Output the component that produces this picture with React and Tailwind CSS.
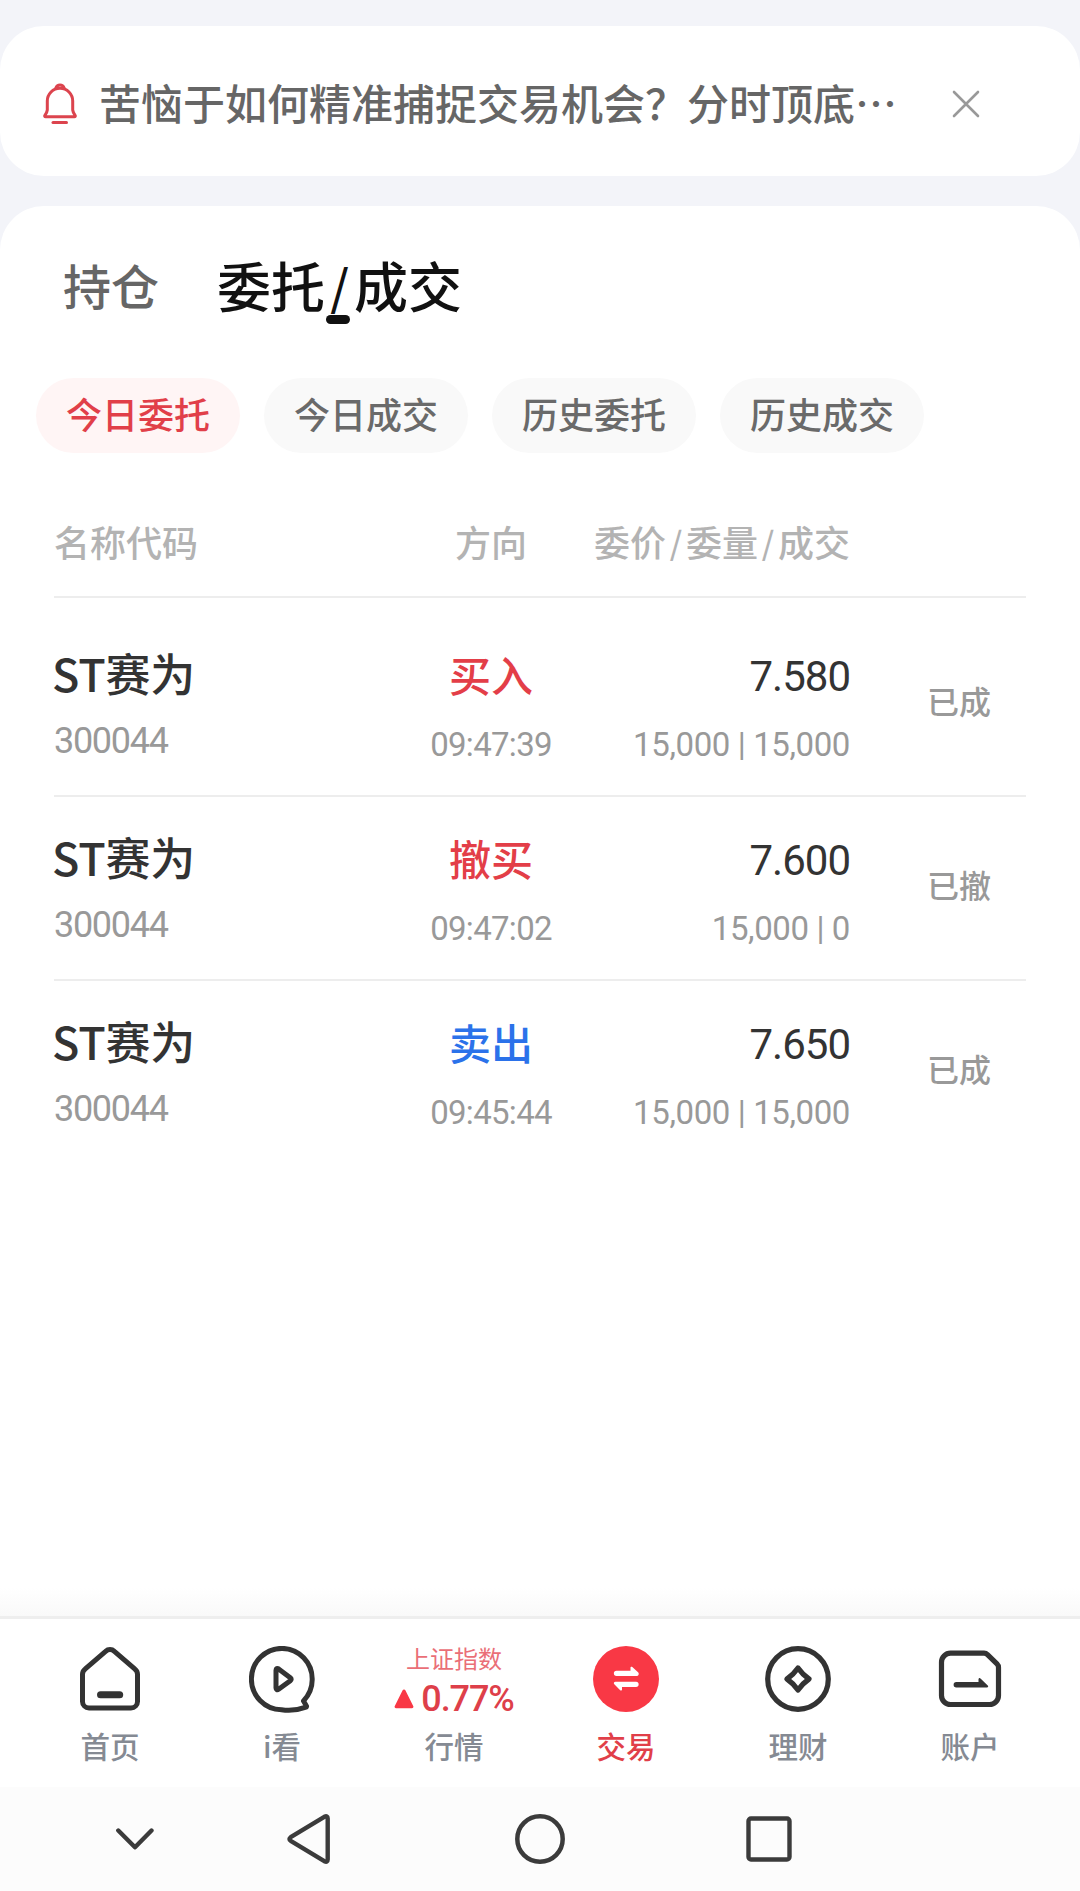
import { Fragment } from 'react';

// ── Données ───────────────────────────────────

const FILTERS = ['今日委托', '今日成交', '历史委托', '历史成交'];

const ORDERS = [
  { name: 'ST赛为', code: '300044', side: '买入', time: '09:47:39', price: '7.580', volume: '15,000', filled: '15,000', status: '已成' },
  { name: 'ST赛为', code: '300044', side: '撤买', time: '09:47:02', price: '7.600', volume: '15,000', filled: '0', status: '已撤' },
  { name: 'ST赛为', code: '300044', side: '卖出', time: '09:45:44', price: '7.650', volume: '15,000', filled: '15,000', status: '已成' },
];

// ── Icons ─────────────────────────────────────

function BellIcon() {
  return (
    <svg width="34" height="42" viewBox="0 0 34 42" fill="none" stroke="#dc444e" strokeWidth="3" strokeLinecap="round" strokeLinejoin="round">
      <path d="M4.300 27V18a12.700 12.800 0 0 1 25.400 0V27c.2 2.200 1.200 3.600 2.500 5.500.3.700 0 1.200-.8 1.200H2.600c-.8 0-1.100-.5-.8-1.200C3.100 30.600 4.100 29.200 4.300 27Z" />
      <path d="M12.800 5.200c.8-2.200 2.300-3.200 4.200-3.200s3.400 1 4.200 3.200" />
      <path d="M10 39.500h13.500" />
    </svg>
  );
}

function CloseIcon() {
  return (
    <svg width="28" height="28" viewBox="0 0 28 28" fill="none" stroke="#999" strokeWidth="2.600" strokeLinecap="round">
      <path d="M2 2l24 24M26 2L2 26" />
    </svg>
  );
}

function HomeIcon() {
  return (
    <svg width="66" height="68" viewBox="0 0 66 68" fill="none" stroke="#333" strokeWidth="5" strokeLinejoin="round" strokeLinecap="round">
      <path d="M28.600 5.300a6.500 6.500 0 0 1 8.800 0L58 23.200a6.500 6.500 0 0 1 2.500 5V55.500a6.500 6.500 0 0 1-6.500 6.500H12a6.500 6.500 0 0 1-6.500-6.500V28.200a6.500 6.500 0 0 1 2.500-5Z" />
      <path d="M23.500 48.700h19.200" strokeWidth="7" />
    </svg>
  );
}

function WatchIcon() {
  return (
    <svg width="66" height="68" viewBox="0 0 66 68" fill="none" stroke="#333" strokeWidth="5" strokeLinejoin="round" strokeLinecap="round">
      <path d="M54.500 55c5-5.500 8.700-12.500 8.700-21.300A30.400 30.700 0 1 0 32.500 63.800c8.500 1.300 17 .2 24.500-2.600.8-.4.700-1.200.2-1.700Z" />
      <path d="M27 24.200c0-1.700 1.300-2.200 2.600-1.300L41.300 31.800c1.200.9 1.200 2 0 2.900L29.600 43.300c-1.300.9-2.600.4-2.600-1.300Z" />
    </svg>
  );
}

function TradeIcon() {
  return (
    <svg width="66" height="68" viewBox="0 0 66 68">
      <circle cx="33" cy="33" r="33" fill="#f93845" />
      <path d="M23.500 24.700H37.500v-3c0-1 1-1.400 1.800-.7l6 5.600c.9 1 .5 3.400-1.200 3.400H23.500a2.650 2.650 0 0 1 0-5.300Z" fill="#fff" />
      <path d="M43 35.700H22.500c-1.700 0-2.100 1.600-1.200 2.600l5.900 5.900c.8.700 1.800.3 1.800-.7v-2.500H43a2.650 2.650 0 0 0 0-5.300Z" fill="#fff" />
    </svg>
  );
}

function WealthIcon() {
  return (
    <svg width="66" height="68" viewBox="0 0 66 68" fill="none" stroke="#333" strokeWidth="5.200" strokeLinejoin="round">
      <circle cx="33" cy="33" r="30.300" />
      <path d="M33 22q4.500 6.500 11 11q-6.500 4.500-11 11q-4.500-6.500-11-11q6.500-4.500 11-11Z" />
    </svg>
  );
}

function AccountIcon() {
  return (
    <svg width="66" height="68" viewBox="0 0 66 68" fill="none" stroke="#333" strokeWidth="5.200" strokeLinejoin="round" strokeLinecap="round">
      <path d="M13.500 7.200H47a5 5 0 0 1 3.500 1.400L60 17.800a5 5 0 0 1 1.500 3.600V49.500a9 9 0 0 1-9 9H13.500a9 9 0 0 1-9-9V16.200a9 9 0 0 1 9-9Z" />
      <path d="M19.300 36H41.500V33.500c0-1.500 1-2 2-1l7 6.700c1.200 1.100.8 2.200-.6 2.200H19.300a2.700 2.700 0 0 1 0-5.400Z" fill="#333" stroke="none" />
    </svg>
  );
}

// ── Sub-components ────────────────────────────

function Notice() {
  return (
    <div className="flex h-[150px] items-center rounded-[44px] bg-white pl-[43px] pt-[5px]">
      <BellIcon />
      <p className="-mt-1 ml-[22px] w-[800px] whitespace-nowrap text-[42px] leading-[60px] text-[#666]">
        苦恼于如何精准捕捉交易机会？分时顶底…
      </p>
      <button className="ml-[53px]" aria-label="关闭">
        <CloseIcon />
      </button>
    </div>
  );
}

function Slashed({ parts, className }) {
  return parts.map((part, i) => (
    <Fragment key={part}>
      {i > 0 && <span className={className}>/</span>}
      {part}
    </Fragment>
  ));
}

function Tabs() {
  return (
    <div className="flex items-start pl-[63px] pt-[42px]">
      <span className="text-[48px] leading-[72px] text-[#666]">持仓</span>
      <span className="relative ml-[58px] flex pt-px text-[54px] leading-[72px] text-[#111]">
        <Slashed parts={['委托', '成交']} className="w-[29px] text-center text-[48px] leading-[70px]" />
        <span className="absolute left-[109px] top-[67px] h-[9px] w-6 rounded-full bg-[#111]" />
      </span>
    </div>
  );
}

function Filters() {
  return (
    <div className="mt-[57px] flex gap-6 pl-9">
      {FILTERS.map((label, i) => (
        <button
          key={label}
          className={`h-[75px] w-[204px] rounded-full pb-[5px] text-[36px] font-medium leading-[70px] ${
            i === 0 ? 'bg-[#fff5f5] text-[#e13f49]' : 'bg-[#f9f9f9] text-[#6a6a6a]'
          }`}
        >
          {label}
        </button>
      ))}
    </div>
  );
}

function OrderRow({ order, last }) {
  const sideColor = order.side === '卖出' ? 'text-[#2b72ea]' : 'text-[#e33e48]';

  return (
    <div className={`flex h-[184px] border-b-2 ${last ? 'border-transparent' : 'border-[#ededed]'}`}>
      <div className="w-[360px] pt-[30px]">
        <p className="-ml-0.5 text-[45px] leading-[60px] tracking-[-0.2px] text-[#333]">{order.name}</p>
        <p className="mt-[18px] font-['Roboto'] text-[36px] font-normal leading-[40px] tracking-[-1.3px] text-[#999]">{order.code}</p>
      </div>
      <div className="w-[154px] pt-[31px] text-center">
        <p className={`text-[42px] leading-[60px] ${sideColor}`}>{order.side}</p>
        <p className="mt-[21px] font-['Roboto'] text-[33px] font-normal leading-[40px] tracking-[-0.7px] text-[#999]">{order.time}</p>
      </div>
      <div className="w-[282px] pt-[34px] text-right font-['Roboto'] font-normal">
        <p className="text-[42px] leading-[60px] tracking-[-1px] text-[#333]">{order.price}</p>
        <p className="mt-[18px] text-[33px] leading-[40px] tracking-[-0.4px] text-[#999]">
          {order.volume} | {order.filled}
        </p>
      </div>
      <p className="ml-auto w-[134px] pt-[67px] text-center text-[32px] leading-[40px] text-[#999]">{order.status}</p>
    </div>
  );
}

function Orders() {
  return (
    <div className="mt-[53px] px-[54px]">
      <div className="flex h-[92px] border-b-2 border-[#ededed] pt-[5px] text-[36px] leading-[60px] text-[#b3b3b3]">
        <span className="w-[360px]">名称代码</span>
        <span className="w-[154px] text-center">方向</span>
        <span className="flex w-[282px] justify-end">
          <Slashed parts={['委价', '委量', '成交']} className="w-5 text-center text-[32px]" />
        </span>
      </div>
      <div className="pt-[15px]">
        {ORDERS.map((order, i) => (
          <OrderRow key={order.time} order={order} last={i === ORDERS.length - 1} />
        ))}
      </div>
    </div>
  );
}

function IndexQuote() {
  return (
    <div className="flex h-[68px] flex-col items-center">
      <p className="text-[24px] font-normal leading-6 text-[#ea6f77]">上证指数</p>
      <div className="mt-[11px] flex items-center">
        <svg width="20" height="20" viewBox="0 0 20 20" fill="#f93845">
          <path d="M8.500 1.500a1.700 1.700 0 0 1 3 0L19.200 17a1.500 1.500 0 0 1-1.400 2.300H2.200A1.500 1.500 0 0 1 .8 17Z" />
        </svg>
        <span className="ml-[7px] font-['Roboto'] text-[36px] font-medium leading-9 tracking-[-1.1px] text-[#de3f4a]">0.77%</span>
      </div>
    </div>
  );
}

function TabItem({ icon, label, active }) {
  return (
    <div className="flex w-[172px] flex-col items-center">
      {icon}
      <span className={`mt-[9px] text-[29.5px] leading-[44px] ${active ? 'text-[#e13f49]' : 'text-[#858a93]'}`}>
        {label}
      </span>
    </div>
  );
}

function TabBar() {
  return (
    <>
      <div className="h-7 bg-linear-to-b from-white to-[#f9f9f9]" />
      <div className="flex h-[171px] border-t-[3px] border-[#eee] bg-white px-6 pt-[27px]">
        <TabItem icon={<HomeIcon />} label="首页" />
        <TabItem icon={<WatchIcon />} label="i看" />
        <TabItem icon={<IndexQuote />} label="行情" />
        <TabItem icon={<TradeIcon />} label="交易" active />
        <TabItem icon={<WealthIcon />} label="理财" />
        <TabItem icon={<AccountIcon />} label="账户" />
      </div>
    </>
  );
}

function SystemNav() {
  return (
    <div className="flex h-[104px] items-center bg-[#fcfcfc] pl-[116px]">
      <svg width="38" height="22" viewBox="0 0 38 22" fill="none" stroke="#3b3b3b" strokeWidth="4.400" strokeLinecap="round" strokeLinejoin="round">
        <path d="M2.300 2.500L19 19.300L35.500 2.500" />
      </svg>
      <svg className="ml-[133px]" width="44" height="50" viewBox="0 0 44 50" fill="none" stroke="#3b3b3b" strokeWidth="4.400" strokeLinejoin="round">
        <path d="M37.300 2.800Q40.700 1.300 40.700 4.500V45.500Q40.700 48.700 37.300 47.200L3.700 26.800Q1.200 25 3.700 23.200Z" />
      </svg>
      <svg className="ml-[184px]" width="50" height="50" viewBox="0 0 50 50" fill="none" stroke="#3b3b3b" strokeWidth="4.500">
        <circle cx="25" cy="25" r="22.700" />
      </svg>
      <svg className="ml-[181px]" width="46" height="46" viewBox="0 0 46 46" fill="none" stroke="#3b3b3b" strokeWidth="4.400">
        <rect x="2.500" y="2.500" width="41" height="41" rx="2.500" />
      </svg>
    </div>
  );
}

// ── Main component ────────────────────────────

export default function App() {
  return (
    <div
      lang="zh-CN"
      className="flex h-[1891px] w-[1080px] flex-col overflow-hidden bg-[#f3f4f9] pt-[26px] font-['Noto_Sans_CJK_SC',sans-serif] font-medium"
    >
      <Notice />
      <div className="mt-[30px] flex flex-1 flex-col rounded-t-[44px] bg-white">
        <Tabs />
        <Filters />
        <Orders />
        <div className="flex-1" />
        <TabBar />
      </div>
      <SystemNav />
    </div>
  );
}
